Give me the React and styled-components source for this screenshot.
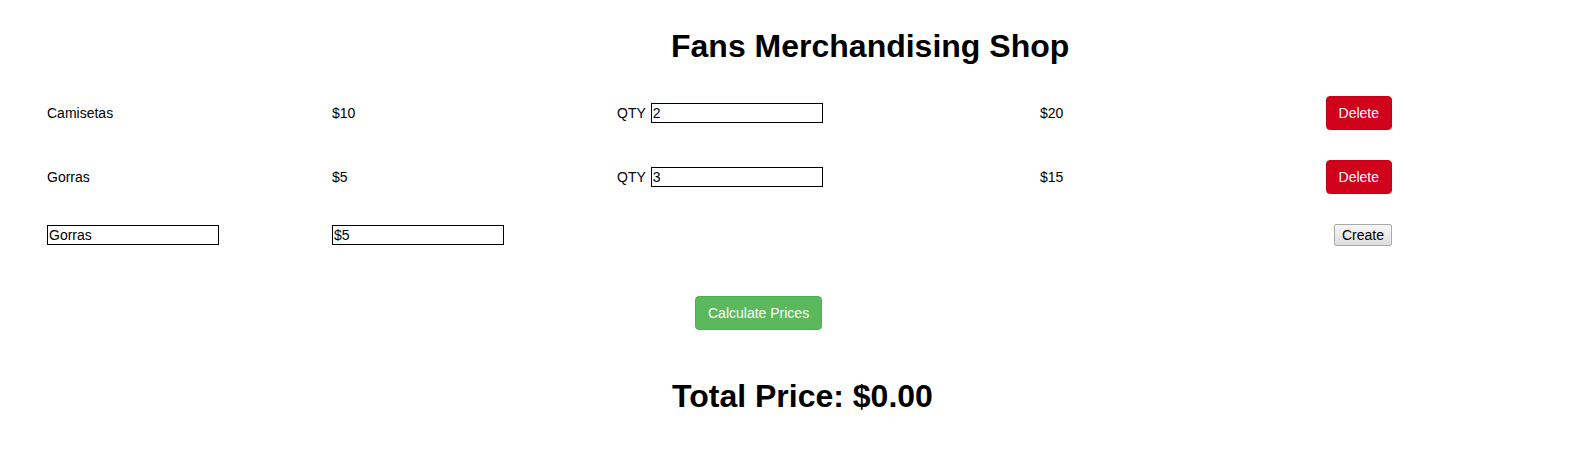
import React, { useState } from "react";
import styled, { createGlobalStyle } from "styled-components";

const GlobalStyle = createGlobalStyle`
  body {
    margin: 0;
    background: #fff;
    color: #000;
    font-family: "Liberation Sans", Arial, sans-serif;
    font-size: 14px;
    line-height: 20px;
  }
`;

function App() {
  const [products] = useState([
    { name: "Camisetas", price: 10, qty: "2" },
    { name: "Gorras", price: 5, qty: "3" },
  ]);

  return (
    <Page>
      <GlobalStyle />
      <Header>
        <Title>Fans Merchandising Shop</Title>
      </Header>

      <Rows>
        {products.map((item) => (
          <Row key={item.name}>
            <Cell>{item.name}</Cell>
            <Cell>${item.price}</Cell>
            <QtyCell>
              QTY
              <Field defaultValue={item.qty} />
            </QtyCell>
            <Cell>${item.price * Number(item.qty)}</Cell>
            <ActionButton $variant="danger">Delete</ActionButton>
          </Row>
        ))}

        <Row>
          <Cell>
            <Field defaultValue="Gorras" />
          </Cell>
          <Cell>
            <Field defaultValue="$5" />
          </Cell>
          <Cell />
          <Cell />
          <CreateButton>Create</CreateButton>
        </Row>
      </Rows>

      <Footer>
        <ActionButton $variant="success" $offset={23}>
          Calculate Prices
        </ActionButton>
        <Total>Total Price: $0.00</Total>
      </Footer>
    </Page>
  );
}

export default App;

const Page = styled.div`
  display: flex;
  flex-direction: column;
  padding-top: 29px;
`;

const Header = styled.header`
  padding-left: 671px;
  margin-bottom: 32px;
`;

const Title = styled.h1`
  margin: 0;
  font-size: 32px;
  line-height: 35px;
  font-weight: bold;
  color: #000;
`;

const Rows = styled.div`
  display: flex;
  flex-direction: column;
  gap: 30px;
  padding: 0 203px 0 47px;
`;

const Row = styled.div`
  display: grid;
  grid-template-columns: 285px 285px 423px 1fr auto;
  align-items: center;
`;

const Cell = styled.div`
  display: flex;
  align-items: center;
`;

const QtyCell = styled(Cell)`
  gap: 5px;
`;

const Field = styled.input`
  box-sizing: border-box;
  width: 172px;
  height: 20px;
  margin: 0;
  padding: 0 1px;
  border: 1px solid #000;
  border-radius: 0;
  font-family: inherit;
  font-size: 14px;
  color: #000;
  background: #fff;
  outline: none;
`;

const ActionButton = styled.button`
  justify-self: end;
  align-self: ${(p) => (p.$offset ? "flex-start" : "center")};
  margin: 0 0 0 ${(p) => p.$offset || 0}px;
  padding: 6px 12px;
  font-family: inherit;
  font-size: 14px;
  line-height: 20px;
  color: #fff;
  border-radius: 4px;
  cursor: pointer;
  background: ${(p) => (p.$variant === "danger" ? "#d0011b" : "#5cb85c")};
  border: 1px solid
    ${(p) => (p.$variant === "danger" ? "#c90019" : "#4cae4c")};
`;

const CreateButton = styled.button`
  justify-self: end;
  margin: 0;
  padding: 2px 7px;
  font-family: inherit;
  font-size: 14px;
  line-height: 16px;
  color: #000;
  background: linear-gradient(#f7f7f7, #dddddd);
  border: 1px solid #a9a9a9;
  border-radius: 2px;
`;

const Footer = styled.footer`
  display: flex;
  flex-direction: column;
  align-items: flex-start;
  padding-left: 672px;
  margin-top: 50px;
`;

const Total = styled.h1`
  margin: 49px 0 0;
  font-size: 32px;
  line-height: 35px;
  font-weight: bold;
  color: #000;
`;
